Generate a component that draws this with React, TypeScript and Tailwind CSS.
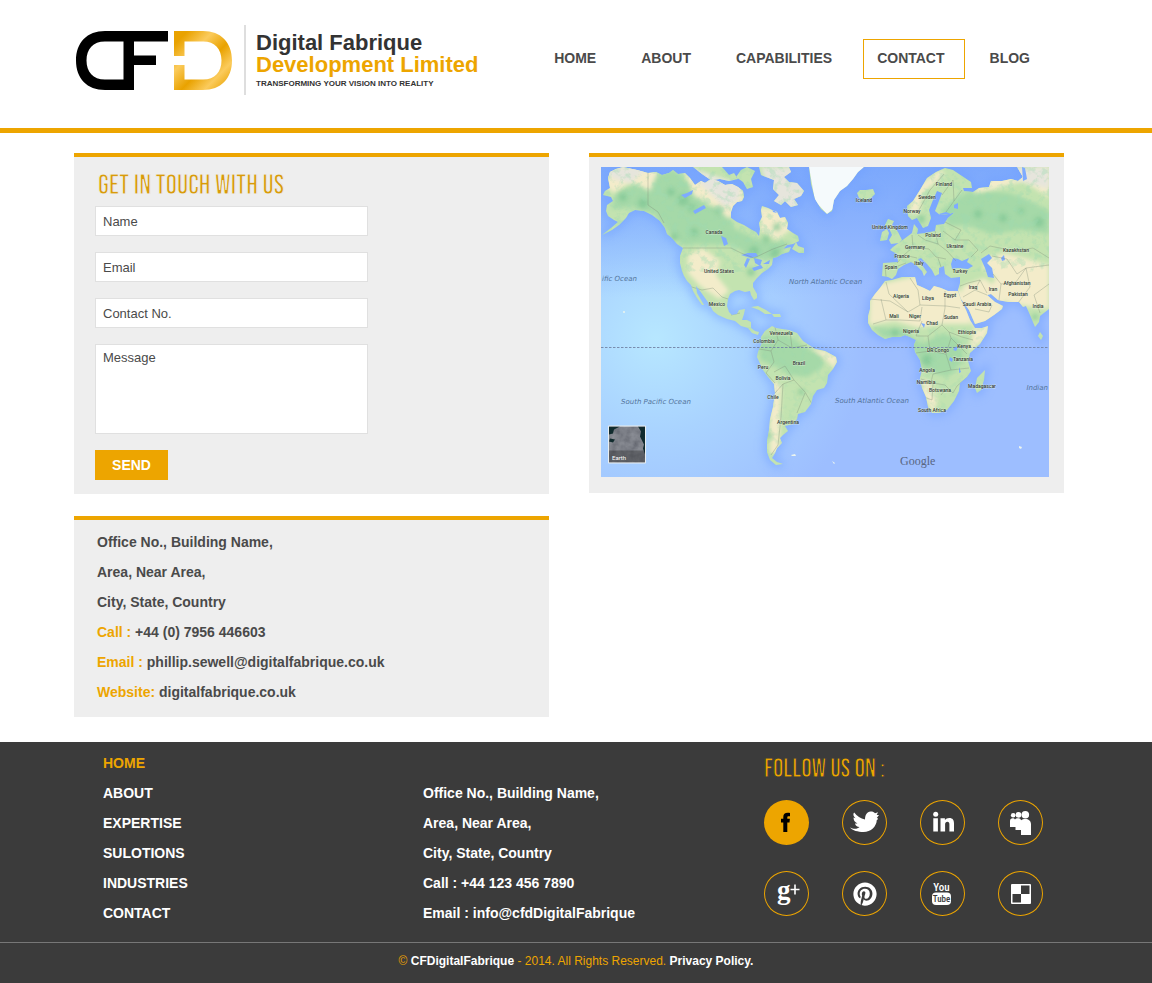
import React from "react";
import { FaPinterest } from "react-icons/fa";

const navItems = ["HOME", "ABOUT", "CAPABILITIES", "CONTACT", "BLOG"];
const footerLinks = ["HOME", "ABOUT", "EXPERTISE", "SULOTIONS", "INDUSTRIES", "CONTACT"];
const officeLines = ["Office No., Building Name,", "Area, Near Area,", "City, State, Country"];

function LogoMark() {
  return (
    <svg viewBox="0 0 156 59" className="h-[59px] w-[156px] shrink-0" aria-hidden="true">
      <defs>
        <linearGradient id="gold" x1="0" y1="0" x2="1" y2="1">
          <stop offset="0" stopColor="#e9a200" />
          <stop offset="0.12" stopColor="#e9a200" />
          <stop offset="0.34" stopColor="#fbcb5c" />
          <stop offset="0.56" stopColor="#e9a200" />
          <stop offset="0.76" stopColor="#fbcb5c" />
          <stop offset="0.95" stopColor="#e9a200" />
        </linearGradient>
      </defs>
      <path
        fillRule="evenodd"
        d="M92 0H29C11 0 0 11.500 0 29.500S11 59 29 59H58V34H80V24.500H58V10.500H92ZM47.500 10.500V48.500H29C17 48.500 10.500 41 10.500 29.500S17 10.500 29 10.500Z"
        fill="#000"
      />
      <path
        d="M98 0H127C145 0 156 11.500 156 29.500S145 59 127 59H98V34H108.500V48.500H127C139 48.500 145.500 41 145.500 29.500S139 10.500 127 10.500H108.500V25H98Z"
        fill="url(#gold)"
      />
    </svg>
  );
}

const landPaths = [
  "M7 11L9 5 15 2 22 0 36 3 47 6 55 5 61 8 68 6 72 3 77 7 84 6 89 11 94 18 100 14 104 16 110 12 117 14 124 18 131 17 137 20 142 24 143 30 141 34 136 35 132 39 130 45 130 51 136 55 143 58 151 63 155 65 158 69 159 62 158 56 161 50 160 43 161 39 167 41 171 43 176 45 179 51 184 50 187 56 186 62 192 66 197 69 198 74 192 77 186 78 182 82 190 80 188 85 181 87 176 90 172 91 171 98 167 102 161 106 156 111 152 116 152 120 156 127 156 131 153 133 150 128 149 124 144 125 138 123 134 124 129 127 127 132 126 139 128 145 131 148 136 147 138 143 144 142 143 147 141 153 146 153 150 155 150 161 154 164 158 165 157 168 151 166 147 161 140 159 134 154 126 152 117 148 112 144 109 138 104 131 99 124 95 119 96 126 100 133 103 138 101 138 96 131 92 124 90 118 86 114 83 109 81 104 79 96 79 89 82 81 76 77 71 71 66 67 64 61 59 54 51 48 43 44 34 43 28 46 25 51 18 58 11 63 1 68 10 61 17 55 13 53 7 49 5 44 6 38 12 34 10 30 2 28 4 24 9 21Z",
  "M156 190L157 185 161 176 160 170 164 164 171 159 175 161 181 162 188 163 196 166 202 174 208 178 214 182 224 184 235 190 236 195 232 202 227 208 226 216 223 221 216 223 212 229 210 237 204 245 197 247 196 252 192 257 184 259 187 264 182 268 179 271 181 276 176 281 174 286 171 291 176 295 182 297 175 298 169 293 166 285 166 274 168 263 169 252 172 240 174 226 173 217 167 210 162 203Z",
  "M284 114L291 113 301 110 314 110 316 118 323 121 329 124 333 119 340 121 347 124 357 124 360 133 365 143 369 153 374 161 381 161 387 159 386 166 379 177 369 186 367 194 370 204 366 210 359 216 358 224 353 234 346 243 338 246 331 246 327 240 325 230 321 221 319 211 321 203 319 193 314 185 313 178 315 173 309 170 304 168 299 170 291 170 284 172 277 168 271 163 267 156 267 149 269 142 269 134 274 127 279 121Z",
  "M282 96L281 109 287 110 291 112 295 108 297 102 303 98 310 95 315 98 321 104 323 109 326 105 321 98 317 92 320 91 326 97 331 103 334 109 338 107 338 101 343 99 344 107 350 111 359 110 359 116 357 123 360 132 368 143 374 157 384 154 393 148 401 142 402 139 394 135 386 128 390 127 397 133 407 135 418 135 422 140 425 139 429 148 434 160 438 155 439 149 448 142V0H416L422 10 417 14 410 12 401 14 390 14 388 20 378 21 372 25 363 24 362 21 371 21 370 15 361 9 352 3 344 1 335 5 326 11 319 23 312 34 306 39 307 49 311 53 316 51 319 56 322 61 327 59 330 51 328 43 332 33 336 24 341 26 338 34 334 44 339 48 348 47 354 45 347 51 343 57 335 58 334 64 324 66 316 67 317 62 313 57 311 66 303 72 292 80 289 83 296 87 297 95Z",
  "M208 0L210 17 214 32 220 42 226 47 231 44 233 33 239 24 246 19 252 12 257 5 263 0Z",
  "M256 26L259 23 265 23 272 22 274 27 270 31 264 33 258 31Z",
  "M288 73L291 68 288 61 284 58 287 52 293 54 291 58 297 65 301 73 298 76 290 77ZM281 65L286 62 288 66 286 73 279 74Z",
  "M160 8L158 0H188L190 5 183 10 188 15 196 16 203 24 200 29 193 32 197 38 190 40 184 34 180 38 173 34 178 28 172 22 173 13Z",
  "M92 0L101 7 110 13 119 12 128 14 137 12 133 6 128 8 121 0ZM140 3L146 0 154 4 150 12 152 20 146 22 142 15 135 10Z",
  "M191 82L195 75 197 79 203 81 203 86 198 86Z",
  "M150 140L157 139 165 143 171 147 164 147 158 143ZM171 147L179 147 180 150 173 150Z",
  "M384 203L383 213 380 223 376 226 374 221 376 211 380 207Z",
  "M439 165L442 169 440 173 437 169Z",
];

const greenPatches = [
  "M49 8L73 3 95 22 105 38 128 44 132 61 160 74 191 75 173 92 150 91 133 78 95 77 83 79 66 63 54 47 30 40 10 42 16 24 38 16Z",
  "M158 171L183 166 206 181 223 186 222 199 207 210 189 208 178 201 159 193Z",
  "M272 160L302 162 320 177 342 166 361 174 363 194 346 210 323 203 312 181 298 169 282 171Z",
  "M366 25L389 24 409 26 448 43V67L420 63 390 67 366 58 348 59 340 43Z",
];

const sandPatches = [
  "M87 88L102 81 119 94 115 108 128 124 118 132 99 119 87 106Z",
  "M1 0H59L49 24 30 15 13 26 0 16Z",
  "M82 0L112 11 143 20 142 35 128 52 112 38 93 29Z",
  "M158 40L182 44 190 62 176 73 160 64Z",
  "M270 119L320 108 360 124 370 157 340 157 318 161 294 154 268 158Z",
  "M362 119L383 111 405 127 399 154 373 160 359 133Z",
  "M385 91L404 86 448 98V142L410 137 387 124 395 111 382 102Z",
  "M385 9L448 0V31L423 14 393 22 372 27Z",
  "M170 214L180 217 179 259 178 286 169 288 169 244Z",
  "M320 210L329 216 336 232 333 247 322 228Z",
  "M373 162L390 157 383 172 368 185Z",
  "M208 180L238 187 234 202 224 192Z",
  "M308 46L315 20 339 3 344 7 322 26 317 48Z",
];

const darkGreen = [
  [82, 33, 6], [91, 41, 4], [70, 25, 4], [42, 36, 5], [153, 84, 5], [165, 72, 4], [176, 60, 4], [174, 86, 5],
  [150, 105, 4], [93, 65, 4], [73, 70, 4], [118, 43, 4], [377, 47, 4], [402, 51, 4], [420, 44, 3], [438, 55, 5],
  [326, 193, 5], [320, 52, 4], [200, 225, 3], [294, 166, 4], [168, 268, 3], [22, 30, 4], [434, 150, 3],
];

const waterBodies =
  "M140 88L147 86 155 86 157 89 150 91ZM146 91L149 92 145 101 143 98ZM153 91L161 93 159 99 154 96ZM151 101L160 98 162 101 153 104ZM162 97L169 93 168 97ZM80 28L86 26 92 23 91 27 84 31ZM92 44L103 38 105 41 94 47ZM120 69L125 71 127 77 123 79ZM350 97L352 91 357 92 361 94 368 91 366 95 372 99 367 102 357 101 351 102ZM380 92L388 87 391 91 386 96 391 101 393 111 387 110 384 101ZM400 91L403 88 404 93 401 94ZM338 47L345 45 350 47 345 50 339 50ZM354 180L358 179 355 184 352 183ZM349 190L352 192 351 195 348 193ZM358 200L360 205 358 206ZM353 38L357 36 357 42 353 41ZM421 0L424 1 426 12 422 14ZM320 156L324 157 323 161ZM171 41L176 46 172 45Z";

const borders =
  "M47 6V38L57 45 63 56M82 81H130L140 86 153 91 172 82 186 77M84 118L101 123 112 121 121 130 127 132M130 148L139 146M174 216L165 206 173 195 170 184 158 182M170 184L177 173 174 160M177 173L191 181 206 178M191 181L189 164M173 205L184 199 193 213 182 217 174 226M193 213L204 225 211 237M182 217L180 250 177 278 170 288M204 226L196 246M269 132L289 134 307 145 319 138 345 139 359 141M285 115L288 127 307 145M309 111L317 123 319 138M344 124V141L341 158 348 165 361 170 372 173M280 132L285 153 272 157M285 153L299 153 319 154 321 140M321 154L315 169 327 169 341 158M327 169L329 184 315 186M329 184L345 187 350 171 348 165M345 187L350 203 332 207 330 215 320 212M350 203L368 201M332 216L344 218 352 226 356 219 369 208M332 216L331 233 323 230M350 171L366 187M340 228L344 223M362 130L374 123 386 128M374 123L379 113 367 116 359 119M374 142L388 145 391 138M379 113L386 126M398 133L400 117 415 115 425 101 448 98M400 117L392 107M425 101L429 120 417 136M380 86L389 79 413 84 432 81 448 91M391 89L406 92 416 107 425 101M342 64L354 73 368 73 377 83 370 90M334 64L337 77 346 84 355 94M337 77L324 73 317 68M311 68L312 80 303 88 296 96M312 80L328 82 335 90 345 92M284 98L285 110M297 99L305 96M303 88L316 91M344 55L360 63 354 73M341 28L352 13 353 34 345 45M318 43L329 23 343 7M361 23L353 34M337 91L340 100M439 146L433 128 448 117";

const mapLabels: [string, number, number][] = [
  ["Canada", 113, 67], ["United States", 118, 106], ["Mexico", 116, 139], ["Iceland", 263, 35],
  ["Finland", 343, 19], ["Sweden", 326, 32], ["Norway", 311, 46], ["United Kingdom", 289, 62],
  ["Poland", 332, 70], ["Germany", 314, 82], ["Ukraine", 354, 81], ["France", 301, 91],
  ["Italy", 318, 98], ["Spain", 290, 102], ["Turkey", 359, 106], ["Kazakhstan", 415, 85],
  ["Afghanistan", 416, 118], ["Iraq", 372, 122], ["Iran", 392, 124], ["Pakistan", 417, 129],
  ["India", 437, 141], ["Algeria", 300, 131], ["Libya", 327, 133], ["Egypt", 349, 130],
  ["Saudi Arabia", 376, 139], ["Mali", 293, 151], ["Niger", 314, 151], ["Sudan", 350, 152],
  ["Chad", 331, 158], ["Nigeria", 310, 166], ["Ethiopia", 366, 167], ["Venezuela", 180, 168],
  ["Colombia", 163, 176], ["DR Congo", 337, 185], ["Kenya", 363, 181], ["Tanzania", 362, 194],
  ["Brazil", 198, 198], ["Peru", 162, 202], ["Bolivia", 182, 213], ["Angola", 326, 205],
  ["Namibia", 325, 217], ["Botswana", 339, 225], ["Madagascar", 381, 221], ["Chile", 172, 232],
  ["Argentina", 187, 257], ["South Africa", 331, 245],
];

function WorldMap() {
  return (
    <svg viewBox="0 0 448 310" className="block w-full" role="img" aria-label="World map">
      <defs>
        <radialGradient id="ocean" gradientUnits="userSpaceOnUse" cx="55" cy="172" r="210">
          <stop offset="0" stopColor="#b7e7ff" />
          <stop offset="0.45" stopColor="#a9d3ff" />
          <stop offset="1" stopColor="#9dbeff" />
        </radialGradient>
        <clipPath id="land">
          {landPaths.map((d) => (
            <path key={d} d={d} />
          ))}
        </clipPath>
        <linearGradient id="north" x1="0" y1="0" x2="0" y2="1">
          <stop offset="0" stopColor="#78a6fc" stopOpacity="0.9" />
          <stop offset="1" stopColor="#78a6fc" stopOpacity="0" />
        </linearGradient>
        <filter id="halo" x="-10%" y="-10%" width="120%" height="120%">
          <feGaussianBlur stdDeviation="5" />
        </filter>
        <filter id="soft" x="-10%" y="-10%" width="120%" height="120%">
          <feGaussianBlur stdDeviation="2" />
        </filter>
        <filter id="terrain" x="0" y="0" width="100%" height="100%">
          <feTurbulence type="fractalNoise" baseFrequency="0.13" numOctaves="4" seed="7" />
          <feColorMatrix values="0 0 0 0 0.34  0 0 0 0 0.7  0 0 0 0 0.44  5 0 0 0 -2.5" />
        </filter>
        <filter id="rock" x="0" y="0" width="100%" height="100%">
          <feTurbulence type="fractalNoise" baseFrequency="0.14" numOctaves="3" seed="3" />
          <feColorMatrix values="0.7 0 0 0 0.1  0.7 0 0 0 0.1  0.7 0 0 0 0.13  0 0 0 0 1" />
        </filter>
      </defs>
      <rect width="448" height="310" fill="url(#ocean)" />
      <rect width="448" height="130" fill="url(#north)" />
      <g fill="#6f9fff" stroke="#6f9fff" strokeWidth="7" opacity="0.5" filter="url(#halo)">
        {landPaths.map((d) => (
          <path key={d} d={d} />
        ))}
      </g>
      <g fill="#c3e3b0">
        {landPaths.map((d) => (
          <path key={d} d={d} />
        ))}
      </g>
      <g clipPath="url(#land)">
        <g fill="#a5d9a8" filter="url(#soft)">
          {greenPatches.map((d) => (
            <path key={d} d={d} />
          ))}
        </g>
        <g fill="#f3ecca" filter="url(#soft)">
          {sandPatches.map((d) => (
            <path key={d} d={d} />
          ))}
        </g>
        <path d="M0 0H48L30 16 12 12ZM86 0L140 18 138 34 124 40 104 22ZM160 0H204V42H172ZM390 0H448V22L420 14Z" fill="#e6e5dc" filter="url(#soft)" />
        <g fill="#7cc493" opacity="0.65" filter="url(#soft)">
          {darkGreen.map(([x, y, r]) => (
            <circle key={`${x}-${y}`} cx={x} cy={y} r={r} />
          ))}
        </g>
        <rect width="448" height="105" filter="url(#terrain)" opacity="0.38" />
        <rect y="160" width="448" height="140" filter="url(#terrain)" opacity="0.25" />
        <path d="M208 0H263L252 14 232 42 226 47 214 34Z" fill="#f5fafc" />
        <path d={waterBodies} fill="#7eabff" />
        <path d={borders} fill="none" stroke="#7f8d79" strokeOpacity="0.5" strokeWidth="0.700" />
      </g>
      <path d="M0 180.500H448" stroke="#7283a5" strokeWidth="0.900" strokeDasharray="2.500 1.500" />
      <g fill="#edf5ee">
        <circle cx="23" cy="145" r="1" />
        <path d="M190 288l4-1 1 2-4 0zM231 294l3 2-1 1zM418 279l3 1-1 2-2-1z" />
      </g>
      <g fill="#333c35" stroke="#eff5e4" strokeWidth="0.800" strokeOpacity="0.55" paintOrder="stroke" fontFamily="Roboto, 'Liberation Sans', sans-serif" fontSize="5" fontWeight="500" textAnchor="middle">
        {mapLabels.map(([name, x, y]) => (
          <text key={name} x={x} y={y}>
            {name}
          </text>
        ))}
      </g>
      <g fill="#54749c" fontFamily="'DejaVu Sans', sans-serif" fontStyle="italic" fontWeight="400" fontSize="7">
        <text x="1" y="114">ific Ocean</text>
        <text x="188" y="117">North Atlantic Ocean</text>
        <text x="20" y="237">South Pacific Ocean</text>
        <text x="234" y="236">South Atlantic Ocean</text>
        <text x="447" y="223" textAnchor="end">Indian</text>
      </g>
      <text x="299" y="298" fontFamily="'Liberation Serif', serif" fontSize="12" fontWeight="400" fill="#596681">
        Google
      </text>
      <rect x="7" y="258.500" width="38" height="38" rx="1" fill="#e8edf0" />
      <svg x="8" y="259.500" width="36" height="36" viewBox="0 0 36 36">
        <rect width="36" height="36" fill="#565a64" />
        <rect width="36" height="36" filter="url(#rock)" opacity="0.4" />
        <path d="M29 0h7v28l-2-6 1-4-4-8 1-5zM0 0h11L5 3 4 7 0 8zM1 12l5 1-2 3-4-1z" fill="#112b2e" />
        <path d="M0 24H36V36H0Z" fill="#222" opacity="0.35" />
        <text x="3" y="33" fontFamily="Roboto, sans-serif" fontSize="6" fontWeight="400" fill="#fff">Earth</text>
      </svg>
    </svg>
  );
}

function Glyph({ children }: { children: React.ReactNode }) {
  return (
    <svg viewBox="0 0 45 45" className="size-full" fill="currentColor" aria-hidden="true">
      {children}
    </svg>
  );
}

const facebook = (
  <Glyph>
    <path d="M19.300 32V22.500H17V18.700H19.300V17C19.300 14 20.900 12.800 23.700 12.800 24.700 12.800 25.500 12.900 26 13V16.300H24.700C23.600 16.300 23.300 16.700 23.300 17.500V18.700H25.900L25.500 22.500H23.300V32Z" />
  </Glyph>
);

const twitter = (
  <Glyph>
    <path d="M8 27.500C12 29.500 15.500 29 17.500 27 15 27 13.500 25.500 13 23.500H15.500C12.500 22 11.500 20 11.500 17.500L13.500 18.200C11 16 11 13.500 12.200 12.500 15 16 18.500 18.500 23 19.500 23 15 25 11.800 28.500 11.500 30.500 11.400 32 12 33 13.200L36 12.300 34.700 15 37 15 34.800 18C37 18.500 36 19.500 34.800 20 34.500 26.500 29 32 21.500 32 16 32 10.500 30.500 8 27.500Z" />
  </Glyph>
);

const linkedin = (
  <Glyph>
    <circle cx="15.700" cy="14.300" r="2.500" />
    <path d="M13.300 18.300H17.900V31.500H13.300ZM20.500 18.300H24.900V20.100C25.900 18.600 27.400 17.900 29.300 17.900 32.700 17.900 34 20 34 23.600V31.500H29.400V24.500C29.400 22.700 28.800 21.800 27.400 21.800S25.100 22.800 25.100 24.500V31.500H20.500Z" />
  </Glyph>
);

const myspace = (
  <Glyph>
    <circle cx="15.200" cy="15.200" r="2.300" />
    <circle cx="20.500" cy="14.800" r="2.900" />
    <circle cx="27.300" cy="14.800" r="3.800" />
    <path d="M12 27V21C12 19.200 13.200 18.300 14.500 18.300S16.500 18.800 17 19.500C17.600 18.700 19 18.300 20.500 18.300S22.500 19 23.200 20.300C24 19.500 25.500 19 27.500 19 30.500 19 33 21 33 24V35H23V30H17.500V27Z" />
  </Glyph>
);

const googlePlus = (
  <Glyph>
    <text x="13" y="28" fontFamily="'Liberation Serif', serif" fontWeight="700" fontSize="27">g</text>
    <path d="M30.200 13.500H31.800V17.700H35.500V19.300H31.800V23.500H30.200V19.300H26.500V17.700H30.200Z" />
  </Glyph>
);

const youtube = (
  <Glyph>
    <text x="21.500" y="20" textAnchor="middle" fontFamily="'Roboto Condensed', 'Oswald', Roboto, sans-serif" fontWeight="500" fontSize="11">You</text>
    <rect x="12" y="21.500" width="19" height="12.500" rx="4" />
    <text x="21.500" y="31" textAnchor="middle" fontFamily="'Roboto Condensed', 'Oswald', Roboto, sans-serif" fontWeight="500" fontSize="9" fill="#3b3b3b">Tube</text>
  </Glyph>
);

const delicious = (
  <Glyph>
    <rect x="13" y="13" width="20" height="20" rx="1" />
    <path d="M23 14.500H31.500V23H23ZM14.500 23H23V31.500H14.500Z" fill="#3b3b3b" />
  </Glyph>
);

const socials: { name: string; icon: React.ReactNode; active?: boolean }[] = [
  { name: "Facebook", icon: facebook, active: true },
  { name: "Twitter", icon: twitter },
  { name: "LinkedIn", icon: linkedin },
  { name: "Myspace", icon: myspace },
  { name: "Google Plus", icon: googlePlus },
  { name: "Pinterest", icon: <FaPinterest size={24} /> },
  { name: "YouTube", icon: youtube },
  { name: "Delicious", icon: delicious },
];

const fieldClass =
  "block w-full border border-[#e0e0e0] bg-white px-[7px] text-[13px] font-normal text-[#4a4a4a] placeholder:text-[#4a4a4a] outline-none";
const display = "font-['Bebas_Neue','Roboto_Condensed',Roboto,sans-serif] font-light";

export default function App() {
  return (
    <div className="min-h-screen bg-white font-['Liberation_Sans',Arial,sans-serif] text-sm font-bold text-[#4a4a4a]">
      <header className="flex h-[133px] justify-between border-b-[5px] border-[#eda500] pr-[102px] pl-[76px]">
        <a href="#home" className="mt-[25px] flex h-[70px] items-center">
          <LogoMark />
          <span className="ml-3 flex h-[70px] flex-col border-l-2 border-[#dedede] pt-[7px] pl-[10px] whitespace-nowrap">
            <span className="text-[22px] leading-[22px] text-[#333]">Digital Fabrique</span>
            <span className="text-[22px] leading-[22px] text-[#eda500]">Development Limited</span>
            <span className="pt-[3px] text-[8px] leading-[10px] text-[#333]">TRANSFORMING YOUR VISION INTO REALITY</span>
          </span>
        </a>
        <nav className="mt-[39px] flex h-10 gap-[11px]">
          {navItems.map((item) => (
            <a
              key={item}
              href={`#${item.toLowerCase()}`}
              className={`border pt-[8px] pr-[19px] pl-[13px] leading-5 ${item === "CONTACT" ? "border-[#eda500]" : "border-transparent"}`}
            >
              {item}
            </a>
          ))}
        </nav>
      </header>

      <main className="grid grid-cols-2 items-start gap-10 pt-5 pr-[88px] pb-[25px] pl-[74px]">
        <div className="flex flex-col gap-[22px]">
          <section className="border-t-4 border-[#eda500] bg-[#eee] px-[21px] pt-[9px] pb-[14px]">
            <h1 className={`${display} pl-[3px] text-[28px] leading-10 text-[#d99b0a] [-webkit-text-stroke:1px_#eee]`}>GET IN TOUCH WITH US</h1>
            <form className="flex w-[273px] max-w-full flex-col gap-4" onSubmit={(e) => e.preventDefault()}>
              <input aria-label="Name" placeholder="Name" className={`${fieldClass} h-[30px]`} />
              <input aria-label="Email" type="email" placeholder="Email" className={`${fieldClass} h-[30px]`} />
              <input aria-label="Contact No." type="tel" placeholder="Contact No." className={`${fieldClass} h-[30px]`} />
              <textarea aria-label="Message" placeholder="Message" className={`${fieldClass} h-[90px] resize-none py-1 leading-[18px]`} />
              <button type="submit" className="h-[30px] w-[73px] bg-[#eda500] text-sm font-bold text-white">SEND</button>
            </form>
          </section>
          <section className="border-t-4 border-[#eda500] bg-[#eee] px-[23px] pt-[7px] pb-[10px] leading-[30px]">
            {officeLines.map((line) => (
              <p key={line}>{line}</p>
            ))}
            <p><span className="text-[#eda500]">Call :</span> +44 (0) 7956 446603</p>
            <p><span className="text-[#eda500]">Email :</span> phillip.sewell@digitalfabrique.co.uk</p>
            <p><span className="text-[#eda500]">Website:</span> digitalfabrique.co.uk</p>
          </section>
        </div>
        <section className="border-t-4 border-[#eda500] bg-[#eee] pt-[10px] pr-[15px] pb-4 pl-3">
          <WorldMap />
        </section>
      </main>

      <footer className="bg-[#3b3b3b] text-white">
        <div className="grid grid-cols-[320fr_341fr_279fr] pt-[6px] pr-[109px] pb-[14px] pl-[103px] leading-[30px]">
          <ul>
            {footerLinks.map((item) => (
              <li key={item}>
                <a href={`#${item.toLowerCase()}`} className={item === "HOME" ? "text-[#eda500]" : "text-white"}>{item}</a>
              </li>
            ))}
          </ul>
          <address className="pt-[30px] not-italic">
            {officeLines.map((line) => (
              <p key={line}>{line}</p>
            ))}
            <p>Call : +44 123 456 7890</p>
            <p>Email : info@cfdDigitalFabrique</p>
          </address>
          <div>
            <h2 className={`${display} text-[26px] leading-[44px] text-[#eda500] [-webkit-text-stroke:1px_#3b3b3b]`}>FOLLOW US ON :</h2>
            <div className="mt-2 grid w-max grid-cols-4 gap-x-[33px] gap-y-[26px]">
              {socials.map(({ name, icon, active }) => (
                <a
                  key={name}
                  href={`#${name.toLowerCase().replace(" ", "-")}`}
                  aria-label={name}
                  className={`flex size-[45px] items-center justify-center rounded-full ${active ? "bg-[#eda500] text-black" : "text-white ring-1 ring-[#eda500] ring-inset"}`}
                >
                  {icon}
                </a>
              ))}
            </div>
          </div>
        </div>
        <p className="border-t border-[#777] pb-1 text-center text-xs leading-9 font-normal text-[#eda500]">
          © <strong className="text-white">CFDigitalFabrique</strong> - 2014. All Rights Reserved.{" "}
          <a href="#privacy" className="font-bold text-white">Privacy Policy.</a>
        </p>
      </footer>
    </div>
  );
}
